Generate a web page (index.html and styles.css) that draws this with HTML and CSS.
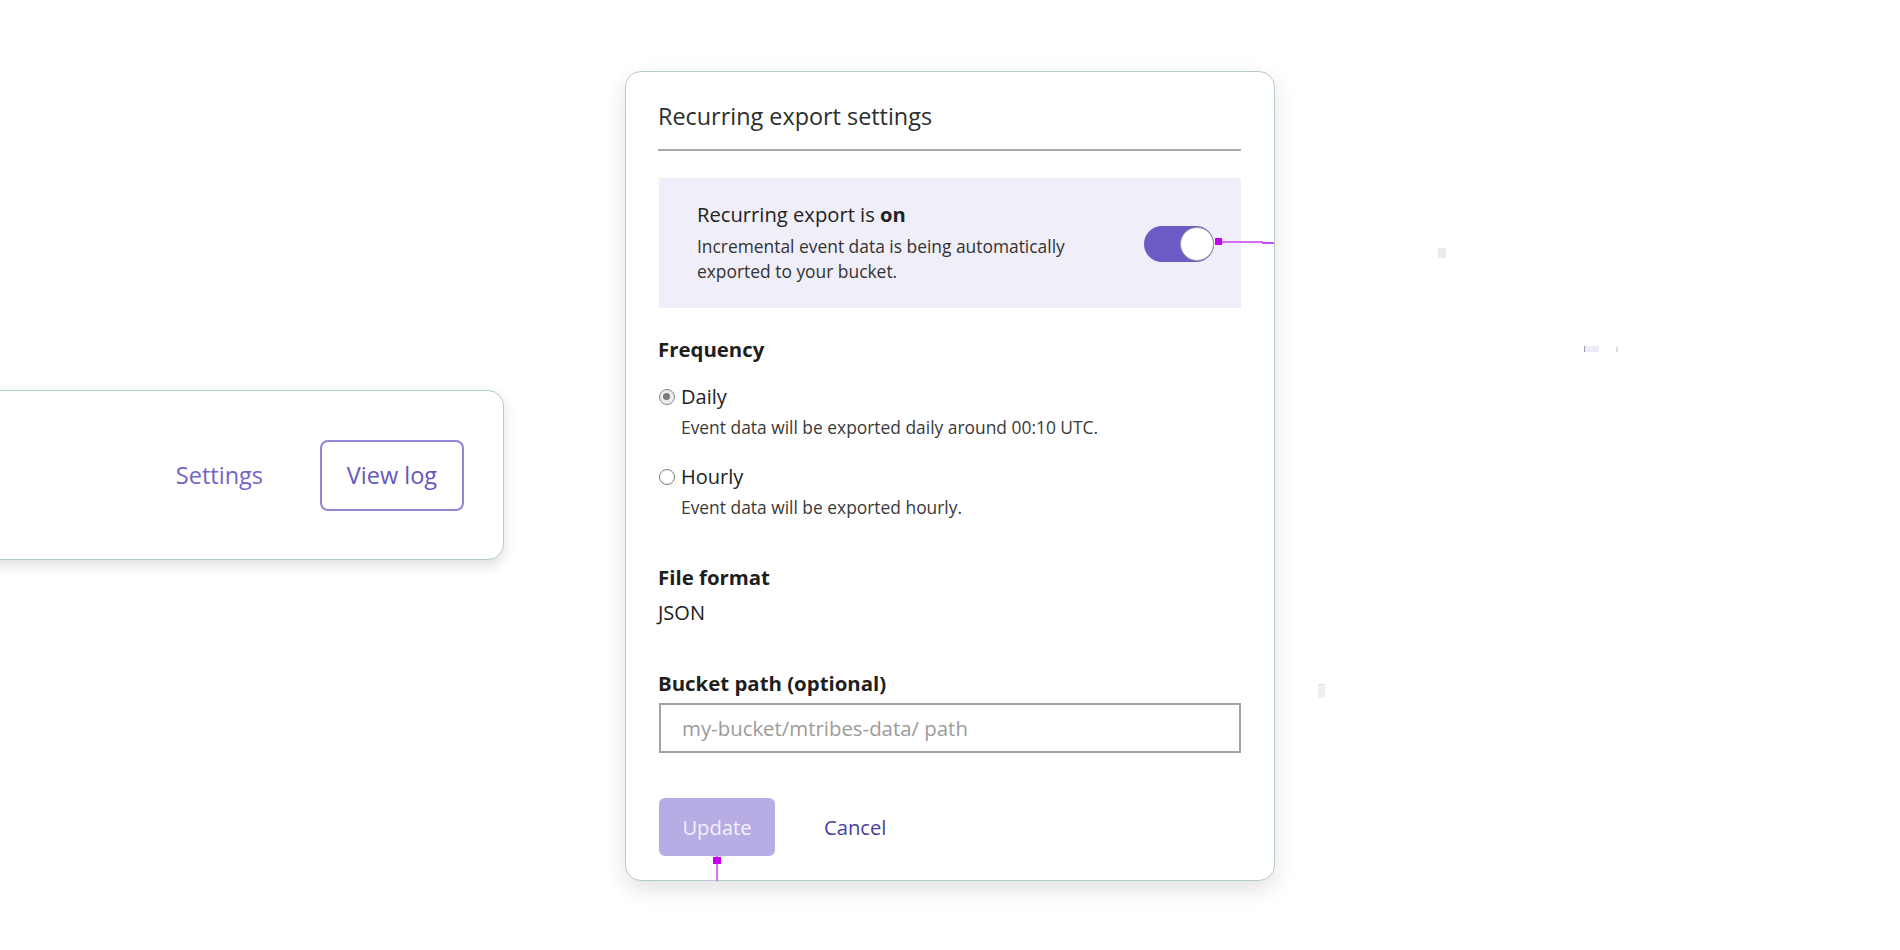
FILE: index.html
```html
<!DOCTYPE html>
<html lang="en">
<head>
<meta charset="utf-8">
<title>Recurring export settings</title>
<link rel="stylesheet" href="styles.css">
</head>
<body>
<div class="stage">
  <div class="export-card">
    <a class="link-settings" href="#">Settings</a>
    <button class="btn-outline" type="button">View log</button>
  </div>

  <div class="modal">
    <h2 class="modal-title">Recurring export settings</h2>
    <div class="divider"></div>

    <div class="status-panel">
      <div class="status-text">
        <div class="status-title">Recurring export is <b>on</b></div>
        <div class="status-desc">Incremental event data is being automatically<br>exported to your bucket.</div>
      </div>
      <div class="toggle">
        <span class="knob"></span>
        <span class="marker marker-h"></span>
        <span class="marker marker-h2"></span>
      </div>
    </div>

    <div class="section-label freq-label">Frequency</div>
    <label class="radio-row">
      <span class="radio checked"></span>
      <span class="radio-label">Daily</span>
    </label>
    <div class="radio-desc">Event data will be exported daily around 00:10 UTC.</div>
    <label class="radio-row hourly">
      <span class="radio"></span>
      <span class="radio-label">Hourly</span>
    </label>
    <div class="radio-desc">Event data will be exported hourly.</div>

    <div class="section-label format-label">File format</div>
    <div class="value">JSON</div>

    <div class="section-label bucket-label">Bucket path (optional)</div>
    <input class="text-input" type="text" placeholder="my-bucket/mtribes-data/ path">

    <div class="actions">
      <button class="btn-primary" type="button">Update<span class="marker marker-v"></span></button>
      <a class="link-cancel" href="#">Cancel</a>
    </div>
  </div>

  <span class="speck speck-1"></span>
  <span class="speck speck-2"></span>
  <span class="speck speck-3"></span>
  <span class="speck speck-4"></span>
</div>
</body>
</html>
```

FILE: styles.css
```css
* { box-sizing: border-box; }

html, body {
  margin: 0;
  padding: 0;
  background: #ffffff;
}

body {
  font-family: "Open Sans", "Liberation Sans", sans-serif;
  color: #222222;
  overflow: hidden;
}

.stage {
  position: relative;
  width: 1900px;
  height: 950px;
  display: flex;
  align-items: flex-start;
}

/* Left card */
.export-card {
  margin-left: -20px;
  margin-top: 390px;
  width: 524px;
  height: 170px;
  border: 1px solid #b7cbce;
  border-radius: 16px;
  background: #fff;
  box-shadow: 0 6px 14px rgba(0, 0, 0, 0.13);
  display: flex;
  align-items: center;
  justify-content: flex-end;
  padding-right: 39px;
  gap: 57px;
}

.link-settings {
  font-size: 23.5px;
  color: #7263c9;
  text-decoration: none;
  line-height: 32px;
}

.btn-outline {
  font-family: inherit;
  font-size: 23.5px;
  color: #6557bd;
  background: #fff;
  border: 2px solid #9286d8;
  border-radius: 8px;
  width: 144px;
  height: 71px;
  padding: 0;
}

/* Modal */
.modal {
  margin-left: 121px;
  margin-top: 71px;
  width: 650px;
  height: 810px;
  border: 1px solid #b7cbce;
  border-radius: 16px;
  background: #fff;
  box-shadow: 0 8px 22px rgba(0, 0, 0, 0.12);
  padding: 28px 33px 0 32px;
}

.modal-title {
  margin: 0;
  font-size: 23.4px;
  font-weight: 400;
  line-height: 32px;
  color: #2e2e2e;
}

.divider {
  margin-top: 17px;
  height: 2px;
  background: #a9a9a9;
}

.status-panel {
  margin-top: 27px;
  margin-left: 1px;
  height: 130px;
  background: #f0eef9;
  padding: 22px 27px 0 38px;
  display: flex;
  align-items: center;
  justify-content: space-between;
}

.status-text {
  align-self: flex-start;
}

.status-title {
  font-size: 20.2px;
  line-height: 28px;
  color: #222;
}

.status-title b { font-weight: 700; }

.status-desc {
  margin-top: 6px;
  font-size: 17.4px;
  line-height: 24.5px;
  color: #333;
}

.toggle {
  position: relative;
  width: 70px;
  height: 36px;
  border-radius: 18px;
  background: #6d5bc5;
  margin-top: -20px;
}

.knob {
  position: absolute;
  right: 0;
  top: 1px;
  width: 34px;
  height: 34px;
  border-radius: 50%;
  background: #fff;
  border: 1.5px solid #9a9a9a;
}

.marker {
  position: absolute;
  display: block;
}

.marker-h {
  left: 71px;
  top: 15px;
  width: 48px;
  height: 2px;
  background: #d46cf4;
}

.marker-h::before {
  content: "";
  position: absolute;
  left: 0;
  top: -3px;
  width: 7px;
  height: 7px;
  background: #c300f2;
}

.marker-h2 {
  left: 118px;
  top: 16px;
  width: 12px;
  height: 2px;
  background: #c94ef0;
}

.section-label {
  font-size: 20.4px;
  font-weight: 700;
  line-height: 28px;
  color: #1e1e1e;
}

.freq-label { margin-top: 27px; }
.format-label { margin-top: 44px; }
.bucket-label { margin-top: 42px; }

.radio-row {
  margin-top: 20px;
  display: flex;
  align-items: center;
  gap: 6px;
  height: 28px;
}

.radio-row.hourly { margin-top: 24px; }

.radio {
  width: 16px;
  height: 16px;
  border-radius: 50%;
  border: 1.5px solid #7d7d7d;
  background: #fff;
  margin-left: 1px;
  position: relative;
}

.radio.checked {
  background: #ececec;
  border-color: #8a8a8a;
}

.radio.checked::after {
  content: "";
  position: absolute;
  left: 3px;
  top: 3px;
  width: 7px;
  height: 7px;
  border-radius: 50%;
  background: #7a7a7a;
}

.radio-label {
  font-size: 20px;
  line-height: 28px;
  color: #222;
}

.radio-desc {
  margin-top: 4px;
  margin-left: 23px;
  font-size: 17.4px;
  line-height: 24px;
  color: #3a3a3a;
}

.value {
  margin-top: 8px;
  font-size: 20px;
  line-height: 28px;
  color: #222;
}

.text-input {
  display: block;
  margin-top: 6px;
  margin-left: 1px;
  width: 582px;
  height: 50px;
  border: 2px solid #a3a3a3;
  border-radius: 0;
  padding: 0 0 0 21px;
  font-family: inherit;
  font-size: 20.4px;
  color: #222;
  background: #fff;
  outline: none;
}

.text-input::placeholder {
  color: #9b9b9b;
}

.actions {
  margin-top: 45px;
  margin-left: 1px;
  display: flex;
  align-items: center;
  gap: 49px;
}

.btn-primary {
  position: relative;
  width: 116px;
  height: 58px;
  border: none;
  border-radius: 6px;
  background: #b7ace4;
  color: #f3f1fb;
  font-family: inherit;
  font-size: 20.2px;
  padding: 0;
}

.marker-v {
  left: 57px;
  top: 58px;
  width: 2px;
  height: 25px;
  background: #d46cf4;
}

.marker-v::before {
  content: "";
  position: absolute;
  left: -3px;
  top: 1px;
  width: 8px;
  height: 7px;
  background: #c300f2;
}

.link-cancel {
  font-size: 20.2px;
  line-height: 28px;
  color: #4a3f9c;
  text-decoration: none;
}

/* stray specks in the capture */
.speck {
  position: absolute;
  display: block;
}

.speck-1 {
  left: 1438px;
  top: 248px;
  width: 8px;
  height: 10px;
  background: #ebebeb;
}

.speck-2 {
  left: 1584px;
  top: 346px;
  width: 15px;
  height: 6px;
  background: #ececf8;
  border-left: 1px solid #9a9a9a;
}

.speck-3 {
  left: 1616px;
  top: 347px;
  width: 2px;
  height: 5px;
  background: #dddddd;
}

.speck-4 {
  left: 1318px;
  top: 684px;
  width: 7px;
  height: 14px;
  background: #f0f0f0;
  border-top: 1px solid #dcdcdc;
}
```
